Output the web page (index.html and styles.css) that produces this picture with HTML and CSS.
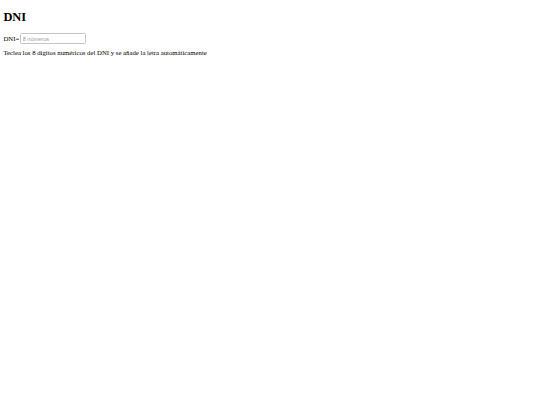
FILE: index.html
```html
<!DOCTYPE html>
<html lang="es">
<head>
<meta charset="utf-8">
<title>DNI</title>
<link rel="stylesheet" href="styles.css">
</head>
<body class="page">
<h1 class="title">DNI</h1>
<form class="form">
<label class="label" for="dni">DNI=</label><input class="field" id="dni" type="text" placeholder="8 números">
</form>
<p class="hint">Teclea los 8 dígitos numéricos del DNI y se añade la letra automáticamente</p>
</body>
</html>
```
FILE: styles.css
```css
.page {
  margin: 3.4px;
  font-family: "Liberation Serif", "Times New Roman", serif;
  font-size: 6.75px;
  color: #000;
  background: #fff;
}
.title {
  font-size: 12.4px;
  font-weight: bold;
  margin: 6.6px 0 8.15px;
  line-height: normal;
}
.form {
  display: flex;
  align-items: center;
  height: 11px;
  margin: 0;
}
.label {
  font-size: 6.75px;
}
.field {
  box-sizing: border-box;
  width: 66px;
  height: 11px;
  margin: 0 0 0 1px;
  padding: 0 1.5px;
  font-family: "Liberation Sans", Arial, sans-serif;
  font-size: 5.6px;
  border: 1px solid #c4c4c4;
  border-radius: 1.5px;
  background: #fff;
  outline: none;
}
.field::placeholder {
  color: #9a9a9a;
}
.hint {
  margin: 5.2px 0 0;
}
```
